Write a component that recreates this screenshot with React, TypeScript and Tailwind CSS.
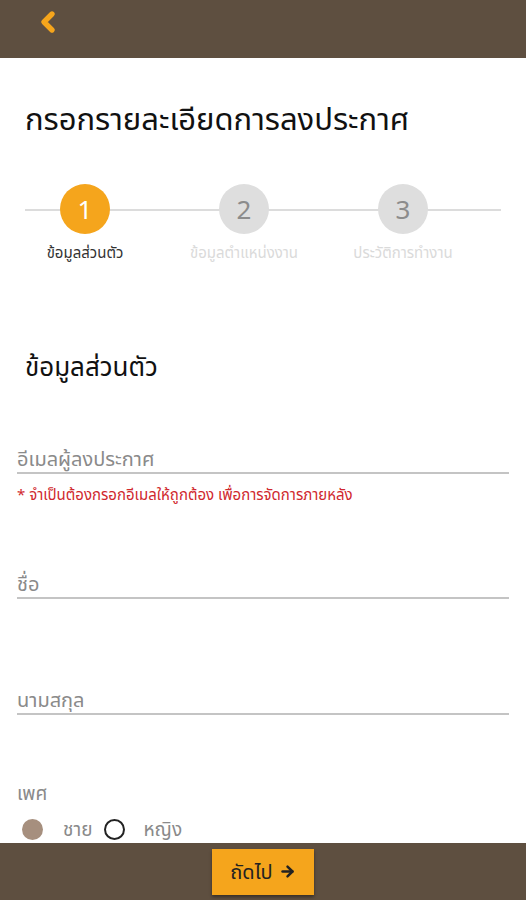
import { ChevronLeft, ArrowRight } from "lucide-react";

const font = { fontFamily: '"Noto Sans", "Noto Sans Thai", "Liberation Sans", sans-serif' };

function Field({ label }: { label: string }) {
  return (
    <div className="px-[17px]">
      <div className="text-[20px] leading-[26px] text-[#8a8a8a] border-b-2 border-[#c4c4c4]">
        {label}
      </div>
    </div>
  );
}

export default function App() {
  const steps = [
    { n: "1", label: "ข้อมูลส่วนตัว", active: true },
    { n: "2", label: "ข้อมูลตำแหน่งงาน", active: false },
    { n: "3", label: "ประวัติการทำงาน", active: false },
  ];

  return (
    <div className="w-[526px] h-[900px] bg-white flex flex-col overflow-hidden" style={font}>
      <div className="h-[58px] bg-[#5e4f40] flex items-center pl-[32px] shrink-0">
        <ChevronLeft className="w-[32px] h-[32px] text-[#f5a51c] -mt-[14px]" strokeWidth={4} />
      </div>

      <div className="flex-1 overflow-hidden">
        <h1 className="pl-[25px] pt-[41px] text-[31px] leading-[38px] text-[#111]">
          กรอกรายละเอียดการลงประกาศ
        </h1>

        <div className="relative mt-[47px] mx-[25px]">
          <div className="absolute left-0 right-0 top-[25px] h-[2px] bg-[#dcdcdc]" />
          <div className="relative flex gap-[39px]">
            {steps.map((s) => (
              <div key={s.n} className="w-[120px] flex flex-col items-center">
                <div
                  className={
                    s.active
                      ? "w-[50px] h-[50px] rounded-full bg-[#f5a51c] text-white flex items-center justify-center text-[26px]"
                      : "w-[50px] h-[50px] rounded-full bg-[#dedede] text-[#8c8c8c] flex items-center justify-center text-[26px]"
                  }
                >
                  {s.n}
                </div>
                <div
                  className={
                    s.active
                      ? "mt-[8px] text-[15px] leading-[20px] text-[#333] whitespace-nowrap"
                      : "mt-[8px] text-[15px] leading-[20px] text-[#dadada] whitespace-nowrap"
                  }
                >
                  {s.label}
                </div>
              </div>
            ))}
          </div>
        </div>

        <h2 className="pl-[25px] mt-[87px] text-[26px] leading-[34px] text-[#111]">ข้อมูลส่วนตัว</h2>

        <div className="mt-[63px]">
          <Field label="อีเมลผู้ลงประกาศ" />
          <div className="px-[17px] mt-[10px] text-[15px] leading-[20px] text-[#d0282e]">
            * จำเป็นต้องกรอกอีเมลให้ถูกต้อง เพื่อการจัดการภายหลัง
          </div>
        </div>

        <div className="mt-[67px]">
          <Field label="ชื่อ" />
        </div>

        <div className="mt-[88px]">
          <Field label="นามสกุล" />
        </div>

        <div className="px-[17px] mt-[66px] text-[19px] leading-[24px] text-[#8a8a8a]">เพศ</div>
        <div className="flex items-center h-[24px] px-[22px] mt-[12px] text-[19px] text-[#8a8a8a]">
          <div className="w-[21px] h-[21px] rounded-full bg-[#a68f7e]" />
          <span className="ml-[20px]">ชาย</span>
          <div className="ml-[12px] w-[21px] h-[21px] rounded-full border-2 border-[#222]" />
          <span className="ml-[18px]">หญิง</span>
        </div>
      </div>

      <div className="h-[57px] bg-[#5e4f40] flex items-center justify-center shrink-0">
        <div className="w-[102px] h-[46px] bg-[#f5a51c] flex items-center justify-center gap-[6px] shadow-[0_2px_3px_rgba(0,0,0,0.4)] text-[20px] text-[#222]">
          ถัดไป
          <ArrowRight className="w-[17px] h-[17px]" strokeWidth={3.5} />
        </div>
      </div>
    </div>
  );
}
